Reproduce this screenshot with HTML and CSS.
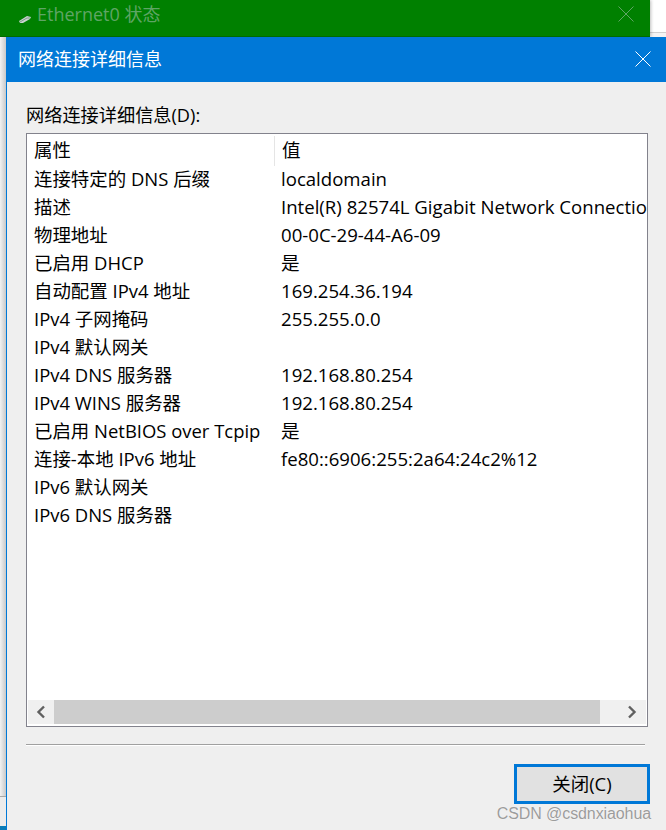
FILE: index.html
```html
<!DOCTYPE html>
<html lang="zh-CN">
<head>
  <meta charset="UTF-8" />
  <title>网络连接详细信息</title>
  <link rel="stylesheet" href="styles.css">
</head>
<body>

  <div class="back-window">
    <div class="back-title">
      <svg class="back-icon" width="14" height="10" viewBox="0 0 14 10">
        <path d="M1 7 L9 2 L13 3 L12 5 L5 9 L2 9 Z" fill="#c9d3cf" />
        <path d="M2 8 L9 4 L12 4" stroke="#7d9a88" stroke-width="1" fill="none" />
      </svg>
      <span class="back-name">Ethernet0 状态</span>
      <svg class="back-close" width="16" height="16" viewBox="0 0 16 16">
        <path d="M0.5 0.5 L15.5 15.5 M15.5 0.5 L0.5 15.5" stroke="#5fa565" stroke-width="1" />
      </svg>
    </div>
    <div class="back-side"></div>
  </div>

  <div class="dialog">
    <div class="title-bar">
      <span class="title-text">网络连接详细信息</span>
      <svg class="close-icon" width="16" height="16" viewBox="0 0 16 16">
        <path d="M0.5 0.5 L15.5 15.5 M15.5 0.5 L0.5 15.5" stroke="#fff" stroke-width="1" />
      </svg>
    </div>

    <div class="content">
      <label class="list-label">网络连接详细信息(D):</label>

      <div class="list">
        <div class="list-head">
          <div class="col-name">属性</div>
          <div class="col-value">值</div>
        </div>
        <div class="rows">
          <div class="row"><div class="col-name">连接特定的 DNS 后缀</div><div class="col-value">localdomain</div></div>
          <div class="row"><div class="col-name">描述</div><div class="col-value">Intel(R) 82574L Gigabit Network Connection</div></div>
          <div class="row"><div class="col-name">物理地址</div><div class="col-value">00-0C-29-44-A6-09</div></div>
          <div class="row"><div class="col-name">已启用 DHCP</div><div class="col-value">是</div></div>
          <div class="row"><div class="col-name">自动配置 IPv4 地址</div><div class="col-value">169.254.36.194</div></div>
          <div class="row"><div class="col-name">IPv4 子网掩码</div><div class="col-value">255.255.0.0</div></div>
          <div class="row"><div class="col-name">IPv4 默认网关</div><div class="col-value"></div></div>
          <div class="row"><div class="col-name">IPv4 DNS 服务器</div><div class="col-value">192.168.80.254</div></div>
          <div class="row"><div class="col-name">IPv4 WINS 服务器</div><div class="col-value">192.168.80.254</div></div>
          <div class="row"><div class="col-name">已启用 NetBIOS over Tcpip</div><div class="col-value">是</div></div>
          <div class="row"><div class="col-name">连接-本地 IPv6 地址</div><div class="col-value">fe80::6906:255:2a64:24c2%12</div></div>
          <div class="row"><div class="col-name">IPv6 默认网关</div><div class="col-value"></div></div>
          <div class="row"><div class="col-name">IPv6 DNS 服务器</div><div class="col-value"></div></div>
        </div>
        <div class="scrollbar">
          <div class="scroll-btn">
            <svg width="10" height="14" viewBox="0 0 10 14"><path d="M8 1.5 L2.5 7 L8 12.5" stroke="#606060" stroke-width="2.4" fill="none" /></svg>
          </div>
          <div class="scroll-thumb"></div>
          <div class="scroll-btn scroll-right">
            <svg width="10" height="14" viewBox="0 0 10 14"><path d="M2 1.5 L7.5 7 L2 12.5" stroke="#606060" stroke-width="2.4" fill="none" /></svg>
          </div>
        </div>
      </div>

      <div class="divider"></div>

      <div class="actions">
        <button class="close-btn">关闭(C)</button>
      </div>
    </div>
  </div>

  <div class="watermark">CSDN @csdnxiaohua</div>
  <div class="taskbar-edge"></div>

</body>
</html>
```

FILE: styles.css
```css
* {
  box-sizing: border-box;
}

body {
  margin: 0;
  width: 666px;
  height: 830px;
  overflow: hidden;
  position: relative;
  background: #ececec;
  font-family: "Open Sans", "Noto Sans CJK SC", sans-serif;
  font-size: 18.45px;
  color: #000;
}

.back-window {
  height: 37px;
  background: linear-gradient(to bottom, #fff 32px, #d0d0d0 32px, #d0d0d0 33px, #f4f4f4 33px);
}

.back-title {
  width: 650px;
  height: 37px;
  background: #008000;
  display: flex;
  align-items: center;
  padding: 0 16px 7px 18px;
  border-bottom: 1px solid #006a00;
  box-shadow: 1px 0 3px rgba(0, 0, 0, 0.25);
}

.back-icon {
  margin-top: 8px;
}

.back-name {
  margin-left: 5px;
  margin-top: -4px;
  font-size: 18px;
  color: #5fa565;
  flex: 1;
}

.back-close {
  margin-top: -1px;
}

.back-side {
  position: absolute;
  left: 0;
  top: 37px;
  width: 6px;
  height: 760px;
  background: linear-gradient(to right, #f2f2f2, #c9c9c9);
  border-bottom: 1px solid #a8a8a8;
}

.dialog {
  margin-left: 6px;
  height: 793px;
  border-left: 1px solid #0078d7;
  background: #efefef;
  display: flex;
  flex-direction: column;
}

.title-bar {
  height: 45px;
  background: #0078d7;
  color: #fff;
  display: flex;
  align-items: center;
  justify-content: space-between;
  padding: 0 15px 2px 12px;
  font-size: 18px;
}

.title-text {
  margin: -2px 0 0 -1px;
}

.content {
  flex: 1;
  padding: 20px 16px 0 19px;
  display: flex;
  flex-direction: column;
}

.list-label {
  height: 31px;
  line-height: 27px;
  font-size: 18.2px;
}

.list {
  width: 622px;
  height: 594px;
  background: #fff;
  border: 1px solid #82828c;
  display: flex;
  flex-direction: column;
  overflow: hidden;
}

.list-head {
  display: flex;
  height: 32px;
  align-items: center;
  flex-shrink: 0;
  line-height: 28px;
}

.list-head .col-name {
  margin-top: -1px;
}

.list-head .col-value {
  border-left: 1px solid #e5e5e5;
  height: 30px;
  line-height: 28px;
  margin-top: 1px;
}

.rows {
  flex: 1;
}

.row {
  display: flex;
  height: 28px;
  line-height: 25px;
  white-space: nowrap;
}

.col-name {
  width: 247px;
  padding-left: 7px;
  flex-shrink: 0;
}

.col-value {
  padding-left: 7px;
  flex: 1;
  font-size: 18.6px;
}

.scrollbar {
  height: 24px;
  margin: 0 1px 2px;
  display: flex;
  align-items: stretch;
  background: #f0f0f0;
}

.scroll-btn {
  width: 26px;
  display: flex;
  align-items: center;
  justify-content: center;
  flex-shrink: 0;
}

.scroll-thumb {
  width: 546px;
  background: #cdcdcd;
}

.scroll-right {
  flex: 1;
  justify-content: flex-end;
  padding-right: 9px;
}

.divider {
  width: 619px;
  height: 2px;
  margin-top: 17px;
  background: #a0a0a0;
  border-bottom: 1px solid #fff;
}

.actions {
  display: flex;
  justify-content: flex-end;
  margin-top: 18px;
}

.close-btn {
  width: 136px;
  height: 40px;
  padding-bottom: 4px;
  background: #e1e1e1;
  border: 3px solid #0078d7;
  font: inherit;
  color: #000;
}

.watermark {
  position: absolute;
  right: 15px;
  top: 805px;
  font-family: "Liberation Sans", sans-serif;
  font-size: 16px;
  letter-spacing: -0.1px;
  color: #9c9c9c;
  text-shadow: 0 0 1px #fff;
}

.taskbar-edge {
  position: absolute;
  left: 0;
  top: 826px;
  width: 6px;
  height: 4px;
  background: #0a7cb8;
}
```
